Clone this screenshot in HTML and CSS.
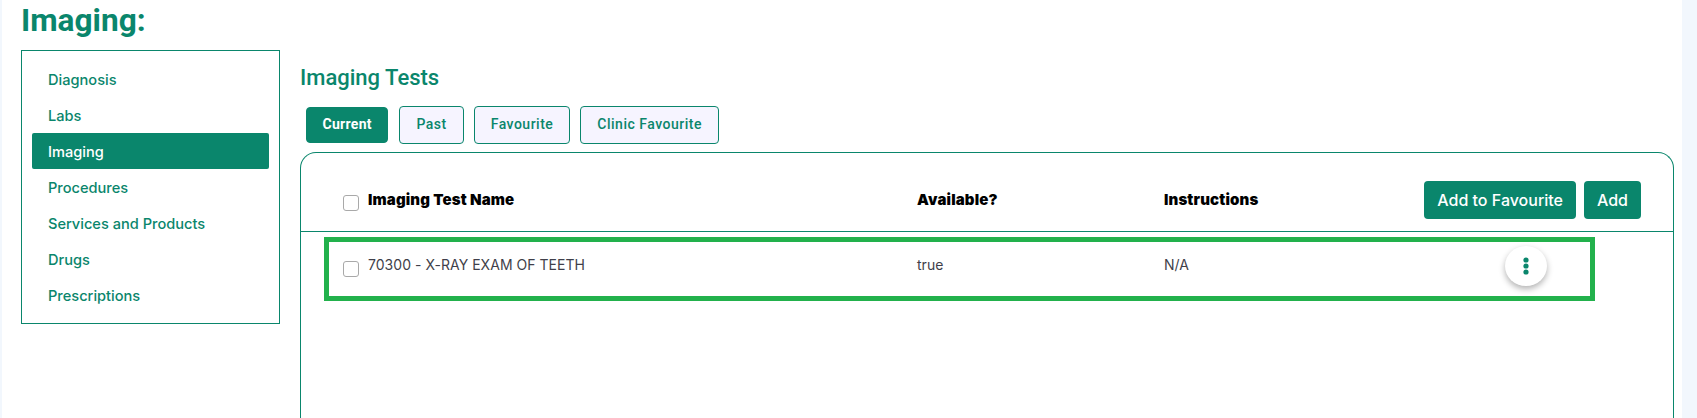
FILE: index.html
```html
<!DOCTYPE html>
<html lang="en">
<head>
  <meta charset="UTF-8">
  <meta name="viewport" content="width=device-width, initial-scale=1.0">
  <title>Imaging</title>
  <link rel="stylesheet" href="styles.css">
</head>
<body>
  <div class="page">
    <h1>Imaging:</h1>
    <div class="layout">
      <ul class="side-nav">
        <li>Diagnosis</li>
        <li>Labs</li>
        <li class="active">Imaging</li>
        <li>Procedures</li>
        <li>Services and Products</li>
        <li>Drugs</li>
        <li>Prescriptions</li>
      </ul>

      <div class="content">
        <h2>Imaging Tests</h2>
        <div class="tabs">
          <button class="tab active">Current</button>
          <button class="tab">Past</button>
          <button class="tab">Favourite</button>
          <button class="tab">Clinic Favourite</button>
        </div>

        <div class="panel">
          <div class="table-head">
            <div class="name-cell"><span class="check"></span><span class="head-text">Imaging Test Name</span></div>
            <div class="head-text">Available?</div>
            <div class="head-text">Instructions</div>
            <div class="head-actions">
              <button class="btn">Add to Favourite</button>
              <button class="btn">Add</button>
            </div>
          </div>
          <div class="table-row">
            <div class="name-cell"><span class="check"></span><span class="cell-text">70300 - X-RAY EXAM OF TEETH</span></div>
            <div class="cell-text">true</div>
            <div class="cell-text">N/A</div>
            <div class="row-actions">
              <button class="kebab" aria-label="More">
                <svg width="6" height="18" viewBox="0 0 6 18"><circle cx="3" cy="3" r="2.6"/><circle cx="3" cy="9" r="2.6"/><circle cx="3" cy="15" r="2.6"/></svg>
              </button>
            </div>
          </div>
        </div>
      </div>
    </div>
  </div>
</body>
</html>
```

FILE: styles.css
```css
* {
  box-sizing: border-box;
}

body {
  margin: 0;
  background: #f2f7fd;
  color: #3f3f4a;
  font-family: 'Inter', sans-serif;
  overflow: hidden;
}

.page {
  height: 418px;
  margin: 0 15px 0 2px;
  padding-left: 19px;
  padding-right: 8px;
  background: white;
}

h1 {
  margin: 0;
  height: 50px;
  padding-top: 1px;
  font-family: 'Roboto', sans-serif;
  font-size: 31.6px;
  line-height: 40px;
  font-weight: 700;
  color: #0a866c;
}

.layout {
  display: flex;
  gap: 20px;
  align-items: flex-start;
}

.side-nav {
  list-style: none;
  margin: 0;
  padding: 10px 10px;
  width: 259px;
  flex: none;
  border: 1px solid #0a866c;
}

.side-nav li {
  height: 36px;
  line-height: 38px;
  padding-left: 16px;
  font-family: 'Inter', sans-serif;
  font-size: 14.6px;
  font-weight: 500;
  color: #0a866c;
  border-radius: 2px;
}

.side-nav li.active {
  background: #0a866c;
  color: white;
}

.content {
  flex: 1;
  min-width: 0;
}

h2 {
  margin: 0;
  height: 56px;
  padding-top: 14px;
  font-family: 'Roboto', sans-serif;
  font-size: 22px;
  line-height: 28px;
  font-weight: 500;
  color: #0a866c;
}

.tabs {
  display: flex;
  align-items: center;
  gap: 10px;
  padding-left: 6px;
  height: 38px;
  margin-bottom: 8px;
}

.tab {
  height: 38px;
  padding: 0 16px 2px;
  background: #f6f4ff;
  border: 1px solid #0a866c;
  border-radius: 4px;
  color: #0a866c;
  font-family: 'Roboto', sans-serif;
  font-size: 14px;
  font-weight: 500;
  letter-spacing: 0.5px;
}

.tab.active {
  height: 36px;
  margin-right: 1px;
  padding: 0 15.5px 2px;
  background: #0a866c;
  color: white;
  font-weight: 700;
  letter-spacing: 0.3px;
}

.panel {
  height: 266px;
  border: 1px solid #0a866c;
  border-bottom: none;
  border-radius: 16px 16px 0 0;
}

.table-head,
.table-row {
  display: grid;
  align-items: center;
}

.table-head {
  height: 79px;
  padding: 17px 32px 0 42px;
  grid-template-columns: 574px 247px 1fr auto;
  border-bottom: 1px solid #0a866c;
  font-size: 15px;
  font-weight: 900;
  letter-spacing: 0.15px;
  color: black;
}

.head-text {
  margin-bottom: 2px;
}

.table-row {
  height: 64px;
  margin: 5px 0 0 23px;
  width: 1271px;
  padding: 0 0 0 14px;
  grid-template-columns: 574px 247px 1fr 85px;
  border: 5px solid #22b14c;
  font-size: 14px;
  letter-spacing: 0.03px;
}

.cell-text {
  margin-bottom: 9px;
}

.name-cell {
  display: flex;
  align-items: center;
  gap: 9px;
}

.check {
  display: inline-block;
  width: 16px;
  height: 16px;
  background: white;
  border: 1px solid #a9a9a9;
  border-radius: 3px;
}

.table-head .check {
  margin-top: 4px;
}

.head-actions {
  display: flex;
  gap: 8px;
  margin-top: -2px;
}

.btn {
  height: 38px;
  padding: 0 13px;
  background: #0a866c;
  border: none;
  border-radius: 4px;
  color: white;
  font-family: 'Inter', sans-serif;
  font-size: 16px;
  font-weight: 500;
}

.row-actions {
  display: flex;
  margin-bottom: 6px;
}

.kebab {
  display: flex;
  align-items: center;
  justify-content: center;
  width: 42px;
  height: 40px;
  padding: 0;
  background: white;
  border: none;
  border-radius: 50%;
  box-shadow: 0 3px 6px rgba(0, 0, 0, 0.3);
}

.kebab svg {
  fill: #0a866c;
}
```
